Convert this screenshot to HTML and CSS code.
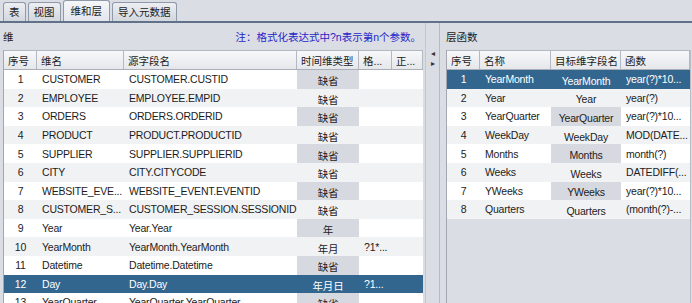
FILE: index.html
```html
<!DOCTYPE html>
<html>
<head>
  <title>维和层</title>
  <link rel="stylesheet" href="styles.css">
</head>
<body>
  <div class="tabs">
    <div class="tab">表</div>
    <div class="tab">视图</div>
    <div class="tab active">维和层</div>
    <div class="tab">导入元数据</div>
  </div>

  <div class="main">
    <!-- dimensions -->
    <div class="panel left">
      <div class="caption">
        <span>维</span>
        <span class="note">注：格式化表达式中?n表示第n个参数。</span>
      </div>
      <div class="grid dims">
        <div class="row head">
          <div>序号</div><div>维名</div><div>源字段名</div><div>时间维类型</div><div>格...</div><div>正...</div>
        </div>
        <div class="row"><div class="num">1</div><div>CUSTOMER</div><div>CUSTOMER.CUSTID</div><div class="combo">缺省</div><div></div><div></div></div>
        <div class="row"><div class="num">2</div><div>EMPLOYEE</div><div>EMPLOYEE.EMPID</div><div class="combo">缺省</div><div></div><div></div></div>
        <div class="row"><div class="num">3</div><div>ORDERS</div><div>ORDERS.ORDERID</div><div class="combo">缺省</div><div></div><div></div></div>
        <div class="row"><div class="num">4</div><div>PRODUCT</div><div>PRODUCT.PRODUCTID</div><div class="combo">缺省</div><div></div><div></div></div>
        <div class="row"><div class="num">5</div><div>SUPPLIER</div><div>SUPPLIER.SUPPLIERID</div><div class="combo">缺省</div><div></div><div></div></div>
        <div class="row"><div class="num">6</div><div>CITY</div><div>CITY.CITYCODE</div><div class="combo">缺省</div><div></div><div></div></div>
        <div class="row"><div class="num">7</div><div>WEBSITE_EVE...</div><div>WEBSITE_EVENT.EVENTID</div><div class="combo">缺省</div><div></div><div></div></div>
        <div class="row"><div class="num">8</div><div>CUSTOMER_S...</div><div>CUSTOMER_SESSION.SESSIONID</div><div class="combo">缺省</div><div></div><div></div></div>
        <div class="row"><div class="num">9</div><div>Year</div><div>Year.Year</div><div class="combo">年</div><div></div><div></div></div>
        <div class="row"><div class="num">10</div><div>YearMonth</div><div>YearMonth.YearMonth</div><div class="combo">年月</div><div>?1*...</div><div></div></div>
        <div class="row"><div class="num">11</div><div>Datetime</div><div>Datetime.Datetime</div><div class="combo">缺省</div><div></div><div></div></div>
        <div class="row sel"><div class="num">12</div><div>Day</div><div>Day.Day</div><div class="combo">年月日</div><div>?1...</div><div></div></div>
        <div class="row"><div class="num">13</div><div>YearQuarter</div><div>YearQuarter.YearQuarter</div><div class="combo">缺省</div><div></div><div></div></div>
      </div>
    </div>

    <div class="splitter">
      <span class="arrow">&#9666;</span>
      <span class="arrow">&#9656;</span>
    </div>

    <!-- level functions -->
    <div class="panel right">
      <div class="caption">
        <span>层函数</span>
      </div>
      <div class="grid levels">
        <div class="row head">
          <div>序号</div><div>名称</div><div>目标维字段名</div><div>函数</div>
        </div>
        <div class="row sel"><div class="num">1</div><div>YearMonth</div><div class="combo">YearMonth</div><div>year(?)*10...</div></div>
        <div class="row"><div class="num">2</div><div>Year</div><div class="combo">Year</div><div>year(?)</div></div>
        <div class="row"><div class="num">3</div><div>YearQuarter</div><div class="combo">YearQuarter</div><div>year(?)*10...</div></div>
        <div class="row"><div class="num">4</div><div>WeekDay</div><div class="combo">WeekDay</div><div>MOD(DATE...</div></div>
        <div class="row"><div class="num">5</div><div>Months</div><div class="combo">Months</div><div>month(?)</div></div>
        <div class="row"><div class="num">6</div><div>Weeks</div><div class="combo">Weeks</div><div>DATEDIFF(...</div></div>
        <div class="row"><div class="num">7</div><div>YWeeks</div><div class="combo">YWeeks</div><div>year(?)*10...</div></div>
        <div class="row"><div class="num">8</div><div>Quarters</div><div class="combo">Quarters</div><div>(month(?)-...</div></div>
      </div>
    </div>
  </div>
</body>
</html>
```

FILE: styles.css
```css
body {
  margin: 0;
  width: 692px;
  height: 303px;
  overflow: hidden;
  background-color: #dadde4;
  color: #1c1c1c;
  font-family: "Liberation Sans", "Noto Sans CJK SC", sans-serif;
  font-size: 10.5px;
}
.tabs {
  display: flex;
  align-items: flex-end;
  gap: 2px;
  height: 21px;
  padding-left: 3px;
}
.tab {
  height: 18px;
  line-height: 18px;
  padding: 0 5px;
  border: 1px solid #8f99a8;
  border-bottom: none;
  border-radius: 3px 3px 0 0;
  background: linear-gradient(#eceef2, #d3d7de);
}
.tab.active {
  height: 20px;
  line-height: 20px;
  padding: 0 7px;
  background: linear-gradient(#f4f6f9, #e3e7ed);
}
.main {
  display: flex;
  height: 280px;
  border-top: 2px solid #62718a;
}
.panel {
  display: flex;
  flex-direction: column;
}
.left {
  width: 421px;
  padding-left: 3px;
}
.right {
  flex: 1;
  padding-left: 6px;
}
.caption {
  display: flex;
  justify-content: space-between;
  align-items: center;
  height: 27px;
  padding-right: 2px;
}
.note {
  color: #2626c8;
}
.splitter {
  width: 14px;
  margin-left: 2px;
  border-left: 1px solid #c2c6cd;
  border-right: 1px solid #b6bac2;
  display: flex;
  flex-direction: column;
  align-items: center;
  gap: 1px;
  padding-top: 26px;
  font-size: 8px;
  line-height: 9px;
  color: #333;
}
.grid {
  flex: 1;
  border-left: 1px solid #a2a7b0;
  overflow: hidden;
}
.dims {
  background-color: #ffffff;
}
.levels {
  margin-right: 1px;
  border-right: 1px solid #b9bdc5;
}
.row {
  display: grid;
  height: 18.6px;
  align-items: stretch;
}
.dims .row {
  grid-template-columns: 33px 87px 173px 62px 33px 31px;
}
.levels .row {
  grid-template-columns: 33px 71px 70px 69px;
}
.row > div {
  display: flex;
  align-items: center;
  padding-left: 5px;
  white-space: nowrap;
  overflow: hidden;
  letter-spacing: -0.2px;
}
.row:nth-child(odd) {
  background-color: #f1f2f4;
}
.row:nth-child(even) {
  background-color: #ffffff;
}
.row .num {
  justify-content: center;
  padding-left: 0;
}
.row .combo {
  justify-content: center;
  padding-left: 0;
  padding-top: 3px;
}
.row:nth-child(even) .combo {
  background-color: #d6d9e0;
}
.row.sel,
.row.sel .combo {
  background-color: #33668f;
  color: #ffffff;
}
.row.head {
  height: 18px;
  background: linear-gradient(#f7f8fa, #e5e7eb);
  border-top: 1px solid #b4b8c0;
  border-bottom: 1px solid #a9aeb7;
}
.row.head > div {
  padding-left: 4px;
  border-right: 1px solid #b4b8c0;
  letter-spacing: 0;
}
```
